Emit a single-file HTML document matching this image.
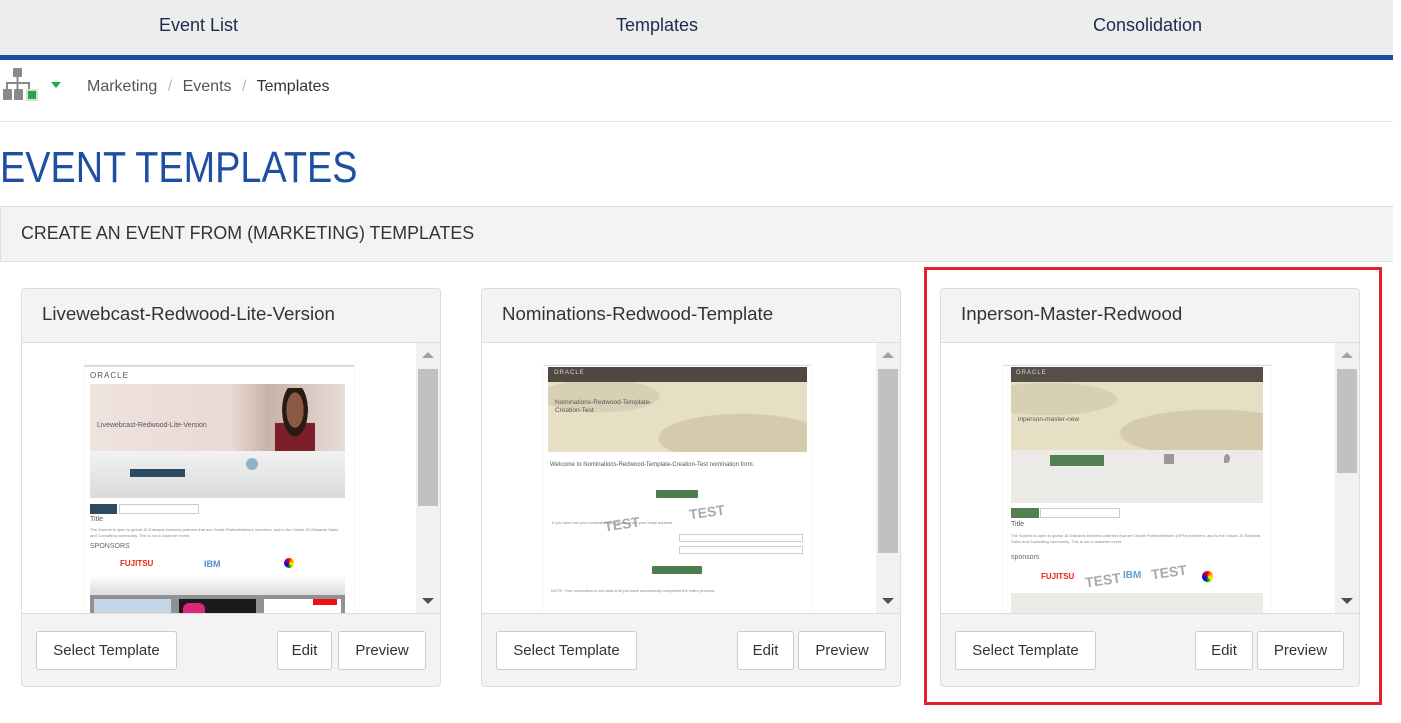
<!DOCTYPE html>
<html><head><meta charset="utf-8"><style>
*{box-sizing:border-box;margin:0;padding:0}
body{width:1401px;height:723px;background:#fff;font-family:"Liberation Sans",sans-serif;position:relative;overflow:hidden;color:#333}
.a{position:absolute}
.nav{left:0;top:0;width:1393px;height:55px;background:#ededed}
.nav div{position:absolute;top:15px;font-size:18px;color:#1a2b4c}
.bar{left:0;top:55px;width:1393px;height:5px;background:#1a4da1}
.bc{top:78px;font-size:16px;color:#555}
.card{position:absolute;top:288px;width:420px;height:399px;border:1px solid #ddd;border-radius:4px;background:#f3f3f3;overflow:hidden}
.card .h{position:absolute;left:0;top:0;width:418px;height:54px;border-bottom:1px solid #ddd;font-size:18.7px;color:#333;padding:14px 0 0 20px}
.card .p{position:absolute;left:0;top:54px;width:418px;height:271px;background:#fff;border-bottom:1px solid #ddd;overflow:hidden}
.sb{position:absolute;right:0;top:0;width:24px;height:271px;background:#f1f1f1}
.sb .t{position:absolute;left:2px;top:26px;width:20px;background:#c1c1c1}
.up{position:absolute;left:6px;top:9px;width:0;height:0;border-left:6px solid transparent;border-right:6px solid transparent;border-bottom:6px solid #a3a3a3}
.dn{position:absolute;left:6px;bottom:10px;width:0;height:0;border-left:6px solid transparent;border-right:6px solid transparent;border-top:6px solid #505050}
.btn{position:absolute;top:342px;height:39px;border:1px solid #ccc;border-radius:3px;background:#fff;font-size:15px;color:#333;text-align:center;line-height:37px}
.pg{position:absolute;top:22px;width:270px;height:260px;background:#fff;border-top:2px solid #ddd;box-shadow:0 0 1px #ddd}
.tiny{font-size:4px;color:#888;line-height:6px}
</style></head><body>
<div class="a nav"><div style="left:159px">Event List</div><div style="left:616px">Templates</div><div style="left:1093px">Consolidation</div></div>
<div class="a bar"></div>
<svg class="a" style="left:2px;top:68px" width="40" height="34" viewBox="0 0 40 34">
<rect x="11" y="0" width="9" height="9" rx="1" fill="#8a8a8a"/><rect x="14.5" y="9" width="2" height="6" fill="#8a8a8a"/><rect x="4" y="14" width="24" height="2" fill="#8a8a8a"/><rect x="4" y="14" width="2" height="7" fill="#8a8a8a"/><rect x="14.5" y="14" width="2" height="7" fill="#8a8a8a"/><rect x="26" y="14" width="2" height="7" fill="#8a8a8a"/>
<rect x="1" y="21" width="9" height="11" rx="1" fill="#8a8a8a"/><rect x="12" y="21" width="9" height="11" rx="1" fill="#8a8a8a"/><rect x="24" y="21" width="12" height="12" fill="#ddd"/><rect x="26" y="23" width="8" height="8" fill="#1aaa4a"/></svg>
<div class="a" style="left:51px;top:82px;border-left:5px solid transparent;border-right:5px solid transparent;border-top:6px solid #1aaa4a"></div>
<div class="a bc" style="left:87px">Marketing <span style="color:#bbb;margin:0 6px">/</span> Events <span style="color:#bbb;margin:0 6px">/</span> <span style="color:#333">Templates</span></div>
<div class="a" style="left:0;top:121px;width:1393px;height:1px;background:#e5e5e5"></div>
<div class="a" style="left:0;top:143px;font-size:44px;color:#1f4fa3;transform:scaleX(0.86);transform-origin:left">EVENT TEMPLATES</div>
<div class="a" style="left:0;top:206px;width:1393px;height:56px;background:#f3f3f3;border-top:1px solid #ddd;border-bottom:1px solid #ddd;border-left:1px solid #ddd"></div>
<div class="a" style="left:21px;top:223px;font-size:18px;color:#333;transform:scaleX(0.99);transform-origin:left">CREATE AN EVENT FROM (MARKETING) TEMPLATES</div>

<!-- Card 1 -->
<div class="card" style="left:21px">
<div class="h">Livewebcast-Redwood-Lite-Version</div>
<div class="p">
<div class="pg" style="left:62px">
 <div class="a" style="left:6px;top:4px;font-size:8px;color:#555;letter-spacing:1px">ORACLE</div>
 <div class="a" style="left:6px;top:17px;width:255px;height:67px;background:linear-gradient(90deg,#efe3df,#ead9d5 55%,#c9b3a8 70%,#e8dcd8)"><div class="a" style="left:185px;top:4px;width:40px;height:63px;background:radial-gradient(ellipse at 50% 35%,#8a5a45 0 30%,#2a1a14 31% 45%,transparent 46%),linear-gradient(#0000 55%,#7d1f2a 56%)"></div><div class="a" style="left:7px;top:38px;font-size:7px;color:#555">Livewebcast-Redwood-Lite-Version</div></div>
 <div class="a" style="left:6px;top:84px;width:255px;height:47px;background:linear-gradient(#f2f2f2,#d8dadb)"><div class="a" style="left:40px;top:18px;width:55px;height:8px;background:#2c4a63"></div><div class="a" style="left:156px;top:7px;width:12px;height:12px;border-radius:50%;background:#8fb2c9"></div></div>
 <div class="a" style="left:6px;top:137px;width:27px;height:10px;background:#2c4a63"></div>
 <div class="a" style="left:35px;top:137px;width:80px;height:10px;border:1px solid #ccc"></div>
 <div class="a" style="left:6px;top:149px;font-size:7px;color:#555">Title</div>
 <div class="a tiny" style="left:6px;top:160px;width:250px">The Summit is open to global JD Edwards business partners that are Oracle PartnerNetwork members, and to the Oracle JD Edwards Sales and Consulting community. This is not a customer event.</div>
 <div class="a" style="left:6px;top:176px;font-size:7px;color:#666">SPONSORS</div>
 <div class="a" style="left:36px;top:192px;font-size:8px;color:#e21;font-weight:bold">FUJITSU</div>
 <div class="a" style="left:120px;top:192px;font-size:9px;color:#5a8ccc;font-weight:bold">IBM</div>
 <div class="a" style="left:200px;top:191px;width:10px;height:10px;border-radius:50%;background:conic-gradient(red,orange,yellow,green,blue,purple,red)"></div>
 <div class="a" style="left:6px;top:210px;width:255px;height:18px;background:linear-gradient(#fafafa,#ddd)"></div>
 <div class="a" style="left:6px;top:228px;width:255px;height:20px;background:#8f9194"><div class="a" style="left:4px;top:4px;width:77px;height:16px;background:#c4d6e6"></div><div class="a" style="left:89px;top:4px;width:77px;height:16px;background:#1a1a1a"><div class="a" style="left:4px;top:4px;width:22px;height:12px;background:#e0257c;border-radius:6px 6px 0 0"></div></div><div class="a" style="left:174px;top:4px;width:77px;height:16px;background:#fff"><div class="a" style="left:49px;top:0;width:24px;height:6px;background:#e11"></div></div></div>
</div>
<div class="sb"><div class="up"></div><div class="t" style="height:137px"></div><div class="dn"></div></div>
</div>
<div class="btn" style="left:14px;width:141px">Select Template</div>
<div class="btn" style="left:255px;width:55px">Edit</div>
<div class="btn" style="left:316px;width:88px">Preview</div>
</div>

<!-- Card 2 -->
<div class="card" style="left:481px">
<div class="h">Nominations-Redwood-Template</div>
<div class="p">
<div class="pg" style="left:62px;width:267px;border-top:1px solid #ddd">
 <div class="a" style="left:4px;top:1px;width:259px;height:15px;background:#4f4941"><div class="a" style="left:6px;top:3px;font-size:6px;color:#ddd;letter-spacing:1px">ORACLE</div></div>
 <div class="a" style="left:4px;top:16px;width:259px;height:70px;background:radial-gradient(ellipse at 75% 80%,#d4cbae 0 30%,transparent 31%),radial-gradient(ellipse at 20% 20%,#d8d0b4 0 20%,transparent 21%),#e6dfc3"><div class="a" style="left:7px;top:17px;font-size:6.5px;color:#555;line-height:8px">Nominations-Redwood-Template-<br>Creation-Test</div></div>
 <div class="a" style="left:6px;top:96px;font-size:6px;color:#555">Welcome to Nominations-Redwood-Template-Creation-Test nomination form.</div>
 <div class="a" style="left:112px;top:124px;width:42px;height:8px;background:#4d7d4d;border-radius:1px"></div>
 <div class="a" style="left:60px;top:150px;font-size:14px;color:#aaa;font-weight:bold;transform:rotate(-8deg)">TEST</div>
 <div class="a" style="left:145px;top:138px;font-size:14px;color:#aaa;font-weight:bold;transform:rotate(-8deg)">TEST</div>
 <div class="a tiny" style="left:8px;top:154px;width:250px">If you have not your nomination yet please enter your email address.</div>
 <div class="a" style="left:135px;top:168px;width:124px;height:8px;border:1px solid #ccc"></div>
 <div class="a" style="left:135px;top:180px;width:124px;height:8px;border:1px solid #ccc"></div>
 <div class="a" style="left:108px;top:200px;width:50px;height:8px;background:#4d7d4d;border-radius:1px"></div>
 <div class="a tiny" style="left:7px;top:222px">NOTE: Your nomination is not valid until you have successfully completed the entire process.</div>
</div>
<div class="sb"><div class="up"></div><div class="t" style="height:184px"></div><div class="dn"></div></div>
</div>
<div class="btn" style="left:14px;width:141px">Select Template</div>
<div class="btn" style="left:255px;width:57px">Edit</div>
<div class="btn" style="left:316px;width:88px">Preview</div>
</div>

<!-- Card 3 -->
<div class="card" style="left:940px">
<div class="h">Inperson-Master-Redwood</div>
<div class="p">
<div class="pg" style="left:62px;width:268px;border-top:1px solid #ddd">
 <div class="a" style="left:8px;top:1px;width:252px;height:15px;background:#554f48"><div class="a" style="left:5px;top:3px;font-size:6px;color:#ddd;letter-spacing:1px">ORACLE</div></div>
 <div class="a" style="left:8px;top:16px;width:252px;height:68px;background:radial-gradient(ellipse at 80% 75%,#d4cbae 0 32%,transparent 33%),radial-gradient(ellipse at 15% 25%,#d8d0b4 0 22%,transparent 23%),#e6dfc3"><div class="a" style="left:7px;top:34px;font-size:6.5px;color:#555">inperson-master-new</div></div>
 <div class="a" style="left:8px;top:84px;width:252px;height:53px;background:#ebeae6"><div class="a" style="left:39px;top:5px;width:54px;height:11px;background:#538050"></div><div class="a" style="left:153px;top:4px;width:10px;height:10px;background:#999"></div><div class="a" style="left:213px;top:4px;width:6px;height:9px;border-radius:50% 50% 50% 0;background:#999"></div></div>
 <div class="a" style="left:8px;top:142px;width:28px;height:10px;background:#538050"></div>
 <div class="a" style="left:37px;top:142px;width:80px;height:10px;border:1px solid #ccc"></div>
 <div class="a" style="left:8px;top:155px;font-size:7px;color:#555">Title</div>
 <div class="a tiny" style="left:8px;top:167px;width:250px">The Summit is open to global JD Edwards business partners that are Oracle PartnerNetwork (OPN) members, and to the Oracle JD Edwards Sales and Consulting community. This is not a customer event.</div>
 <div class="a" style="left:8px;top:188px;font-size:7px;color:#666">sponsors</div>
 <div class="a" style="left:38px;top:206px;font-size:8px;color:#e21;font-weight:bold">FUJITSU</div>
 <div class="a" style="left:120px;top:204px;font-size:10px;color:#6a9ad4;font-weight:bold">IBM</div>
 <div class="a" style="left:82px;top:206px;font-size:14px;color:#aaa;font-weight:bold;transform:rotate(-8deg)">TEST</div>
 <div class="a" style="left:148px;top:198px;font-size:14px;color:#aaa;font-weight:bold;transform:rotate(-8deg)">TEST</div>
 <div class="a" style="left:199px;top:205px;width:11px;height:11px;border-radius:50%;background:conic-gradient(red,orange,yellow,green,blue,purple,red)"></div>
 <div class="a" style="left:8px;top:227px;width:252px;height:20px;background:#ebeae6"></div>
</div>
<div class="sb"><div class="up"></div><div class="t" style="height:104px"></div><div class="dn"></div></div>
</div>
<div class="btn" style="left:14px;width:141px">Select Template</div>
<div class="btn" style="left:254px;width:58px">Edit</div>
<div class="btn" style="left:316px;width:87px">Preview</div>
</div>

<div class="a" style="left:924px;top:267px;width:458px;height:438px;border:3px solid #e3202b"></div>
</body></html>
